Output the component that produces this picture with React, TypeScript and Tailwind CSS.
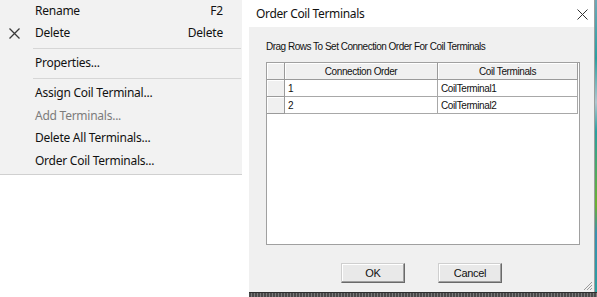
import React from "react";

const menuFont = { fontFamily: '"Noto Sans", "Open Sans", sans-serif' };
const sysFont = { fontFamily: '"Liberation Sans", Arial, sans-serif' };

function MenuItem({ label, shortcut, disabled, icon, h = 22 }: { label: string; shortcut?: string; disabled?: boolean; icon?: React.ReactNode; h?: number }) {
  return (
    <div className="flex items-center" style={{ height: h }}>
      <div className="w-[35px] flex items-center justify-center pl-[1px] pr-[8px]">{icon}</div>
      <div className={`flex-1 text-[12px] leading-none tracking-[-0.25px] ${disabled ? "text-[#7c7c7c]" : "text-[#111]"}`}>{label}</div>
      {shortcut && <div className="text-[12px] leading-none tracking-[-0.2px] text-[#111] pr-[19px]">{shortcut}</div>}
    </div>
  );
}

function Sep() {
  return (
    <div className="h-[8px] flex items-center pl-[33px] pr-[1px]">
      <div className="h-px w-full bg-[#d6d6d6]" />
    </div>
  );
}

function HeaderCell({ children }: { children?: React.ReactNode }) {
  return (
    <div className="h-[17px] bg-[#f0f0f0] border-r border-b border-[#9a9a9a] shadow-[inset_1px_1px_0_#ffffff] flex items-center justify-center text-[10px] tracking-[-0.4px] text-[#111]">
      {children}
    </div>
  );
}

function RowHead() {
  return <div className="h-[17px] bg-[#f0f0f0] border-r border-b border-[#9a9a9a] shadow-[inset_1px_1px_0_#ffffff]" />;
}

function Cell({ children }: { children?: React.ReactNode }) {
  return (
    <div className="h-[17px] bg-white border-r border-b border-[#a8a8a8] flex items-center pl-[3px] text-[10px] tracking-[-0.4px] text-[#111]">
      {children}
    </div>
  );
}

function Btn({ children }: { children: React.ReactNode }) {
  return (
    <div className="w-[64px] h-[20px] bg-[#e9e9e9] border border-t-[#cfcfcf] border-l-[#cfcfcf] border-r-[#6a6a6a] border-b-[#6a6a6a] shadow-[inset_-1px_-1px_0_#a0a0a0,inset_1px_1px_0_#ffffff] flex items-center justify-center text-[11px] tracking-[-0.3px] text-[#111]">
      {children}
    </div>
  );
}

export default function App() {
  return (
    <div className="flex w-[597px] h-[297px] bg-white overflow-hidden">
      <div className="w-[249px] shrink-0">
        <div className="w-[242px] bg-[#f2f2f2] border-b border-[#d0d0d0] pb-[2px]" style={menuFont}>
          <MenuItem label="Rename" shortcut="F2" />
          <MenuItem
            label="Delete"
            shortcut="Delete"
            icon={
              <svg width="11" height="11" viewBox="0 0 11 11">
                <path d="M0.5 0.5 L10.5 10.5 M10.5 0.5 L0.5 10.5" stroke="#3a3a3a" strokeWidth="1.3" fill="none" />
              </svg>
            }
          />
          <Sep />
          <MenuItem label="Properties..." />
          <Sep />
          <MenuItem label="Assign Coil Terminal..." />
          <MenuItem label="Add Terminals..." disabled h={23} />
          <MenuItem label="Delete All Terminals..." />
          <MenuItem label="Order Coil Terminals..." h={23} />
        </div>
      </div>
      <div className="flex flex-col w-[348px]">
        <div className="flex h-[292px]">
          <div className="w-[346px] flex flex-col border-r border-[#9e9e9e]">
            <div className="h-[27px] bg-white flex items-center justify-between pl-[7px] pr-[6px]">
              <span className="text-[12px] text-[#111] tracking-[-0.35px]" style={menuFont}>Order Coil Terminals</span>
              <svg width="11" height="11" viewBox="0 0 11 11" className="mt-[1px]">
                <path d="M0.5 0.5 L10.5 10.5 M10.5 0.5 L0.5 10.5" stroke="#333" strokeWidth="1" fill="none" />
              </svg>
            </div>
            <div className="relative flex-1 bg-[#f0f0f0] pl-[17px] pt-[14px] flex flex-col" style={sysFont}>
              <div className="h-[12px] leading-[12px] text-[10px] tracking-[-0.5px] text-[#111]">
                Drag Rows To Set Connection Order For Coil Terminals
              </div>
              <div className="mt-[9px] w-[314px] h-[183px] bg-white border border-[#a0a0a0]">
                <div className="grid grid-cols-[18px_153px_140px]">
                  <RowHead />
                  <HeaderCell>Connection Order</HeaderCell>
                  <HeaderCell>Coil Terminals</HeaderCell>
                  <RowHead />
                  <Cell>1</Cell>
                  <Cell>CoilTerminal1</Cell>
                  <RowHead />
                  <Cell>2</Cell>
                  <Cell>CoilTerminal2</Cell>
                </div>
              </div>
              <div className="flex mt-[18px] pl-[75px] gap-[33px]">
                <Btn>OK</Btn>
                <Btn>Cancel</Btn>
              </div>
              <svg className="absolute right-[1px] bottom-[1px]" width="11" height="11" viewBox="0 0 11 11">
                <path d="M10 2 L2 10 M10 5 L5 10 M10 8 L8 10" stroke="#9a9a9a" strokeWidth="1" fill="none" />
              </svg>
            </div>
          </div>
          <div className="w-[2px] bg-[linear-gradient(to_bottom,#6fa8b8_0%,#2a9fa0_20%,#b0c8d0_35%,#2a9fa0_45%,#6cb030_70%,#3a8fb0_80%,#2a9fa0_100%)]" />
        </div>
        <div className="h-[5px] bg-[repeating-linear-gradient(to_right,#4a4a4a_0px,#4a4a4a_2px,#7a7a7a_2px,#7a7a7a_3px)] border-t border-[#2e2e2e]" />
      </div>
    </div>
  );
}
